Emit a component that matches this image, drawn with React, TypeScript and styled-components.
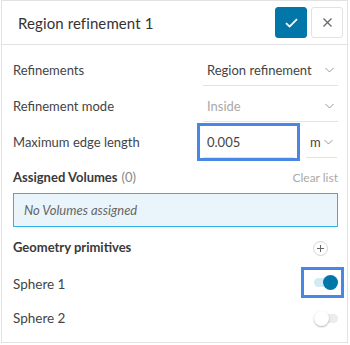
import React from "react";
import styled, { createGlobalStyle } from "styled-components";

const Global = createGlobalStyle`
  html, body { margin: 0; padding: 0; background: #fff; }
  body { font-family: Lato, "Noto Sans", sans-serif; }
  * { box-sizing: border-box; }
`;

const Panel = styled.div`
  width: 347px;
  height: 343px;
  margin-left: 1px;
  border: 1px solid #e2e2e2;
  background: #fff;
  display: flex;
  flex-direction: column;
`;

const Header = styled.div`
  height: 44px;
  border-bottom: 1px solid #e2e2e2;
  display: flex;
  align-items: center;
  padding: 0 4px 0 16px;
  gap: 4px;
`;

const Title = styled.div`
  flex: 1;
  font-size: 15px;
  color: #333;
  letter-spacing: 0.1px;
`;

const IconButton = styled.button<{ $primary?: boolean }>`
  width: 32px;
  height: 31px;
  border-radius: 3px;
  border: 1px solid ${(p) => (p.$primary ? "#0077a8" : "#e2e2e2")};
  background: ${(p) => (p.$primary ? "#0077a8" : "#fff")};
  display: flex;
  align-items: center;
  justify-content: center;
  padding: 0;
`;

const Body = styled.div`
  padding: 9px 9px 0 11px;
  display: flex;
  flex-direction: column;
`;

const FieldRow = styled.div`
  display: flex;
  align-items: center;
  height: 32px;
  margin-bottom: 4px;
`;

const Label = styled.div`
  width: 190px;
  font-size: 13px;
  color: #444;
`;

const Controls = styled.div`
  flex: 1;
  display: flex;
  align-items: center;
  gap: 12px;
  height: 100%;
`;

const Select = styled.div<{ $disabled?: boolean; $w?: number }>`
  height: 32px;
  ${(p) => (p.$w ? `width: ${p.$w}px;` : "flex: 1;")}
  border-bottom: 1px solid #e2e2e2;
  display: flex;
  align-items: center;
  justify-content: space-between;
  padding: 0 4px 0 4px;
  font-size: 13px;
  color: ${(p) => (p.$disabled ? "#aaa" : "#444")};
`;

const FocusBox = styled.div`
  border: 3px solid #4a86e3;
  padding: 0 3px;
  margin: -3px -6px;
  width: 103px;
`;

const Input = styled.div`
  height: 32px;
  border-bottom: 1px solid #e2e2e2;
  display: flex;
  align-items: center;
  padding-left: 4px;
  font-size: 13px;
  color: #444;
`;

const SectionHead = styled.div`
  margin-top: 5px;
  height: 20px;
  display: flex;
  align-items: center;
  justify-content: space-between;
`;

const SectionTitle = styled.div`
  font-size: 13px;
  font-weight: 700;
  color: #3a3a3a;
`;

const Count = styled.span`
  font-weight: 400;
  color: #888;
  margin-left: 4px;
`;

const ClearLink = styled.div`
  font-size: 12px;
  color: #aaa;
`;

const InfoBox = styled.div`
  margin-top: 6px;
  height: 34px;
  border: 1px solid #2ab4e6;
  background: #e9f5fb;
  display: flex;
  align-items: center;
  padding-left: 10px;
  font-size: 13px;
  font-style: italic;
  color: #666;
`;

const GroupHead = styled.div`
  height: 40px;
  display: flex;
  align-items: center;
  justify-content: space-between;
`;

const AddButton = styled.div`
  width: 15px;
  height: 15px;
  border-radius: 50%;
  border: 1px solid #d6d6d6;
  margin-right: 10px;
  margin-top: 2px;
  display: flex;
  align-items: center;
  justify-content: center;
`;

const ItemRow = styled.div`
  height: 34px;
  display: flex;
  align-items: center;
  justify-content: space-between;
  font-size: 13.5px;
  color: #444;
`;

const ToggleFocus = styled.div<{ $focused?: boolean }>`
  border: 3px solid ${(p) => (p.$focused ? "#4a86e3" : "transparent")};
  padding: 5px 3px 5px 10px;
  margin-right: -6px;
  margin-top: ${(p) => (p.$focused ? "-3px" : "0")};
`;

const Switch = styled.div`
  position: relative;
  width: 24px;
  height: 15px;
  display: flex;
  align-items: center;
`;

const Track = styled.div<{ $on?: boolean }>`
  width: 24px;
  height: 9px;
  border-radius: 5px;
  background: ${(p) => (p.$on ? "#d3eaf5" : "#ececec")};
`;

const Knob = styled.div<{ $on?: boolean }>`
  position: absolute;
  top: 0;
  left: ${(p) => (p.$on ? "9px" : "0")};
  width: 15px;
  height: 15px;
  border-radius: 50%;
  background: ${(p) => (p.$on ? "#0077a8" : "#fff")};
  box-shadow: ${(p) => (p.$on ? "none" : "0 1px 2px rgba(0,0,0,0.3)")};
`;

const Chevron = () => (
  <svg width="9" height="6" viewBox="0 0 9 6">
    <polyline points="0.5,1 4.5,5 8.5,1" fill="none" stroke="#999" strokeWidth="1" />
  </svg>
);

const Toggle = ({ on, focused }: { on?: boolean; focused?: boolean }) => (
  <ToggleFocus $focused={focused}>
    <Switch>
      <Track $on={on} />
      <Knob $on={on} />
    </Switch>
  </ToggleFocus>
);

export default function App() {
  return (
    <>
      <Global />
      <Panel>
        <Header>
          <Title>Region refinement 1</Title>
          <IconButton $primary>
            <svg width="13" height="10" viewBox="0 0 13 10">
              <polyline points="1,5.2 4.6,8.6 12,1.2" fill="none" stroke="#fff" strokeWidth="1.8" />
            </svg>
          </IconButton>
          <IconButton>
            <svg width="9" height="9" viewBox="0 0 9 9">
              <path d="M0.5 0.5 L8.5 8.5 M8.5 0.5 L0.5 8.5" stroke="#666" strokeWidth="1.2" />
            </svg>
          </IconButton>
        </Header>
        <Body>
          <FieldRow>
            <Label>Refinements</Label>
            <Controls>
              <Select>
                Region refinement
                <Chevron />
              </Select>
            </Controls>
          </FieldRow>
          <FieldRow>
            <Label>Refinement mode</Label>
            <Controls>
              <Select $disabled>
                Inside
                <Chevron />
              </Select>
            </Controls>
          </FieldRow>
          <FieldRow>
            <Label>Maximum edge length</Label>
            <Controls>
              <FocusBox>
                <Input>0.005</Input>
              </FocusBox>
              <Select $w={31}>
                m
                <Chevron />
              </Select>
            </Controls>
          </FieldRow>
          <SectionHead>
            <SectionTitle>
              Assigned Volumes<Count>(0)</Count>
            </SectionTitle>
            <ClearLink>Clear list</ClearLink>
          </SectionHead>
          <InfoBox>No Volumes assigned</InfoBox>
          <GroupHead>
            <SectionTitle>Geometry primitives</SectionTitle>
            <AddButton>
              <svg width="7" height="7" viewBox="0 0 7 7">
                <path d="M3.5 0 V7 M0 3.5 H7" stroke="#666" strokeWidth="1" />
              </svg>
            </AddButton>
          </GroupHead>
          <ItemRow>
            Sphere 1
            <Toggle on focused />
          </ItemRow>
          <ItemRow>
            Sphere 2
            <Toggle />
          </ItemRow>
        </Body>
      </Panel>
    </>
  );
}
